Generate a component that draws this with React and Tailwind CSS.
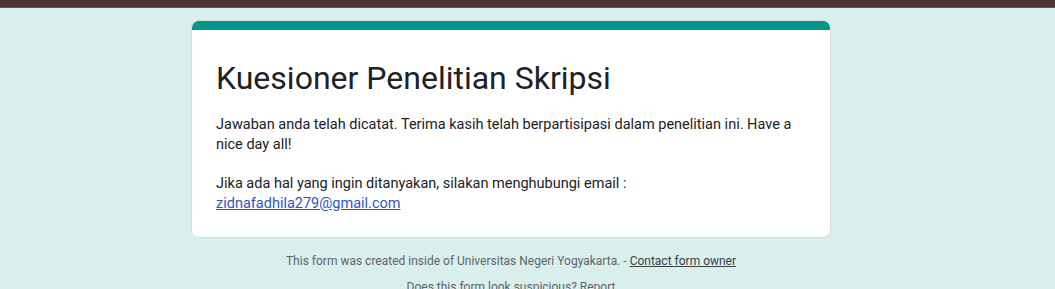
export default function App() {
  return (
    <div className="min-h-[289px] bg-[#d9efec] overflow-hidden" style={{ fontFamily: "Roboto, Arial, sans-serif" }}>
      <div className="h-[7px] bg-[#4e3338]" />
      <div className="h-[1px] bg-[#6b5257]" />
      <div className="w-[1022px]">
        <div className="w-[640px] mx-auto mt-[12px]">
          <div className="rounded-[8px] bg-white border border-[#dadce0] overflow-hidden">
            <div className="h-[10px] bg-[#009688] -mx-px -mt-px" />
            <div className="px-[24px] pt-[28px] pb-[23px]">
              <div className="text-[32px] leading-[40px] text-[#202124]">Kuesioner Penelitian Skripsi</div>
              <div className="mt-[17px] text-[14.5px] leading-[19.75px] text-[#202124] whitespace-pre-wrap">
                Jawaban anda telah dicatat. Terima kasih telah berpartisipasi dalam penelitian ini. Have a nice day all!
                {"\n\n"}Jika ada hal yang ingin ditanyakan, silakan menghubungi email :{"\n"}
                <a className="text-[#2a56c6] underline" href="#">zidnafadhila279@gmail.com</a>
              </div>
            </div>
          </div>
          <div className="mt-[15px] text-center text-[12px] leading-[16px] text-[#5f6368]">
            This form was created inside of Universitas Negeri Yogyakarta. - <span className="underline text-[#3c4043]">Contact form owner</span>
          </div>
          <div className="mt-[10px] text-center text-[12px] leading-[16px] text-[#5f6368]">
            Does this form look suspicious? <span className="underline">Report</span>
          </div>
        </div>
      </div>
    </div>
  );
}
